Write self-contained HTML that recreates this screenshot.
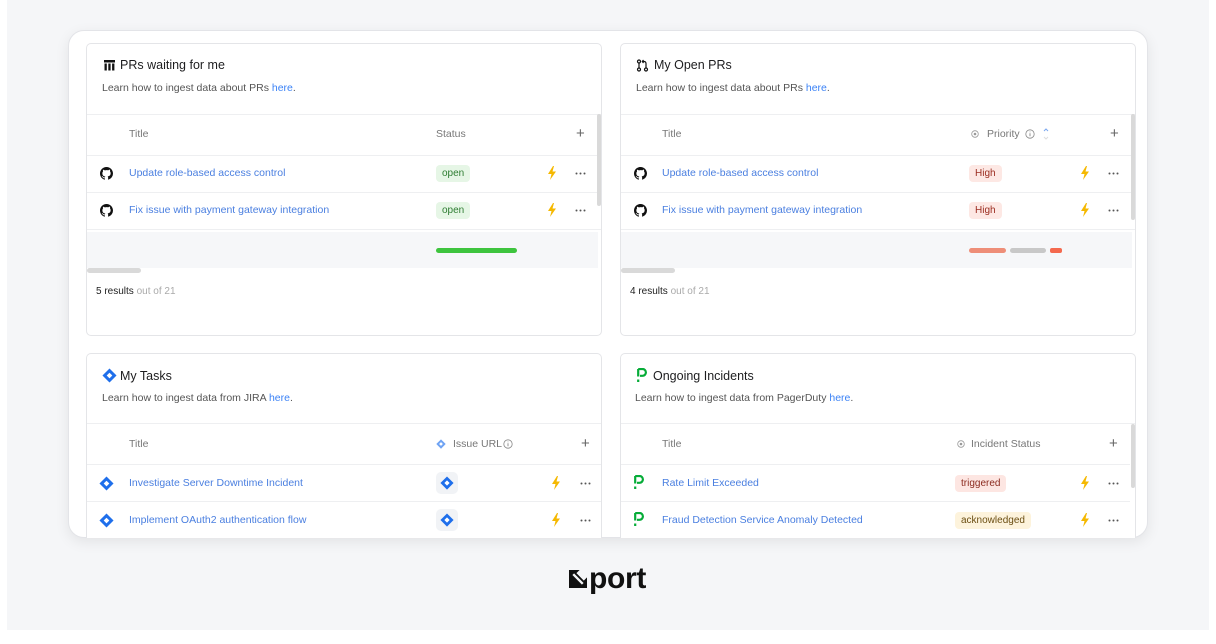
<!DOCTYPE html>
<html><head><meta charset="utf-8"><style>
*{box-sizing:border-box;margin:0;padding:0}
body{width:1216px;height:644px;background:#fff;font-family:"Liberation Sans",sans-serif;position:relative;overflow:hidden;color:#222}
.bg{position:absolute;left:7px;top:0;width:1202px;height:630px;background:#f5f6f8}
.card{position:absolute;left:68px;top:30px;width:1080px;height:508px;background:#fff;border:1px solid #e3e4e8;border-radius:16px;box-shadow:0 4px 14px rgba(0,0,0,.08);overflow:hidden}
.w{position:absolute;background:#fff;border:1px solid #e4e5e8;border-radius:5px;overflow:hidden}
.a{position:absolute;white-space:nowrap;height:16px;line-height:16px}
.t{font-size:12.5px;color:#1d1d1f}
.d{font-size:10.5px;color:#555}
.lnk{color:#3b82f6}
.h{font-size:10.5px;color:#777}
.r{font-size:10.5px;color:#4a7fe0}
.hl{position:absolute;left:0;right:0;height:1px;background:#eeeff1}
.pill{position:absolute;height:17px;line-height:17px;padding:0 6px;border-radius:4px;font-size:10px}
.bolt{position:absolute;width:10px;height:14px}
.dots{position:absolute;width:11px;height:3px}
.plus{position:absolute;font-size:15px;color:#666;line-height:16px;font-weight:300}
.vs{position:absolute;width:4px;background:#d9d9d9;border-radius:2px}
</style></head><body>
<div class="bg"></div>
<div class="card"></div>

<!-- Top-left -->
<div class="w" style="left:86px;top:43px;width:516px;height:293px">
  <svg class="a" style="left:16px;top:15px;width:13px;height:13px" viewBox="0 0 13 13"><rect x="1" y="1" width="11" height="2.5" fill="#111"/><rect x="1.5" y="4.5" width="2.3" height="7" fill="#111"/><rect x="5.3" y="4.5" width="2.3" height="7" fill="#111"/><rect x="9.1" y="4.5" width="2.3" height="7" fill="#111"/></svg>
  <div class="a t" style="left:33px;top:13px">PRs waiting for me</div>
  <div class="a d" style="left:15px;top:36px">Learn how to ingest data about PRs <span class="lnk">here</span>.</div>
  <div class="hl" style="top:70px"></div>
  <div class="a h" style="left:42px;top:82px">Title</div>
  <div class="a h" style="left:349px;top:82px">Status</div>
  <div class="plus" style="left:489px;top:82px">+</div>
  <div class="hl" style="top:111px"></div>
  <svg class="a" style="left:13px;top:123px;width:13px;height:13px" viewBox="0 0 16 16"><path fill="#111" d="M8 0C3.58 0 0 3.58 0 8c0 3.54 2.29 6.53 5.47 7.59.4.07.55-.17.55-.38v-1.33c-2.23.48-2.7-1.07-2.7-1.07-.36-.92-.89-1.17-.89-1.17-.73-.5.06-.49.06-.49.8.06 1.23.83 1.23.83.72 1.23 1.88.87 2.34.67.07-.52.28-.87.51-1.07-1.78-.2-3.65-.89-3.65-3.95 0-.87.31-1.59.82-2.15-.08-.2-.36-1.02.08-2.12 0 0 .67-.21 2.2.82A7.7 7.7 0 0 1 8 3.86c.68 0 1.36.09 2 .27 1.53-1.04 2.2-.82 2.2-.82.44 1.1.16 1.92.08 2.12.51.56.82 1.27.82 2.15 0 3.07-1.87 3.75-3.65 3.95.29.25.54.73.54 1.48v2.2c0 .21.15.46.55.38A8.01 8.01 0 0 0 16 8c0-4.42-3.58-8-8-8z"/></svg>
  <div class="a r" style="left:42px;top:121px">Update role-based access control</div>
  <div class="pill" style="left:349px;top:121px;background:#e6f6e6;color:#2e7d32">open</div>
  <svg class="bolt" style="left:460px;top:122px" viewBox="0 0 10 14"><path d="M6 0L1 8h3.5L3 14l6-8.5H5.5L7 0z" fill="#f5b800"/></svg>
  <svg class="dots" style="left:488px;top:128px" viewBox="0 0 11 3"><circle cx="1.5" cy="1.5" r="1" fill="#555"/><circle cx="5.5" cy="1.5" r="1" fill="#555"/><circle cx="9.5" cy="1.5" r="1" fill="#555"/></svg>
  <div class="hl" style="top:148px"></div>
  <svg class="a" style="left:13px;top:160px;width:13px;height:13px" viewBox="0 0 16 16"><path fill="#111" d="M8 0C3.58 0 0 3.58 0 8c0 3.54 2.29 6.53 5.47 7.59.4.07.55-.17.55-.38v-1.33c-2.230.48-2.7-1.07-2.7-1.07-.36-.92-.89-1.17-.89-1.17-.73-.5.06-.49.06-.49.8.06 1.23.83 1.23.83.72 1.23 1.88.87 2.34.67.07-.52.28-.87.51-1.07-1.78-.2-3.65-.89-3.65-3.95 0-.87.31-1.59.82-2.15-.08-.2-.36-1.02.08-2.12 0 0 .67-.21 2.2.82A7.7 7.7 0 0 1 8 3.86c.68 0 1.36.09 2 .27 1.53-1.04 2.2-.82 2.2-.82.44 1.1.16 1.92.08 2.12.51.56.82 1.27.82 2.15 0 3.07-1.87 3.75-3.65 3.95.29.25.54.73.54 1.48v2.2c0 .21.15.46.55.38A8.01 8.01 0 0 0 16 8c0-4.42-3.58-8-8-8z"/></svg>
  <div class="a r" style="left:42px;top:158px">Fix issue with payment gateway integration</div>
  <div class="pill" style="left:349px;top:158px;background:#e6f6e6;color:#2e7d32">open</div>
  <svg class="bolt" style="left:460px;top:159px" viewBox="0 0 10 14"><path d="M6 0L1 8h3.5L3 14l6-8.5H5.5L7 0z" fill="#f5b800"/></svg>
  <svg class="dots" style="left:488px;top:165px" viewBox="0 0 11 3"><circle cx="1.5" cy="1.5" r="1" fill="#555"/><circle cx="5.5" cy="1.5" r="1" fill="#555"/><circle cx="9.5" cy="1.5" r="1" fill="#555"/></svg>
  <div class="hl" style="top:185px"></div>
  <div style="position:absolute;left:0;top:188px;width:511px;height:36px;background:#f6f7f9"></div>
  <div style="position:absolute;left:349px;top:204px;width:81px;height:5px;border-radius:3px;background:#3ec43e"></div>
  <div style="position:absolute;left:0;top:224px;width:54px;height:5px;border-radius:3px;background:#d9d9d9"></div>
  <div class="vs" style="left:510px;top:70px;height:92px"></div>
  <div class="a" style="left:9px;top:240px;font-size:10px;color:#222">5 results <span style="color:#aaa">out of 21</span></div>
</div>

<!-- Top-right -->
<div class="w" style="left:620px;top:43px;width:516px;height:293px">
  <svg class="a" style="left:15px;top:15px;width:13px;height:13px" viewBox="0 0 13 13" fill="none" stroke="#111" stroke-width="1.2"><circle cx="3" cy="2.5" r="1.5"/><circle cx="3" cy="10.5" r="1.5"/><path d="M3 4v5"/><circle cx="10" cy="10.5" r="1.5"/><path d="M10 9V4.5q0-2-2-2H6.5M7.5 1l-1.2 1.5L7.5 4"/></svg>
  <div class="a t" style="left:33px;top:13px">My Open PRs</div>
  <div class="a d" style="left:15px;top:36px">Learn how to ingest data about PRs <span class="lnk">here</span>.</div>
  <div class="hl" style="top:70px"></div>
  <div class="a h" style="left:41px;top:82px">Title</div>
  <svg class="a" style="left:350px;top:86px;width:8px;height:8px" viewBox="0 0 8 8"><circle cx="4" cy="4" r="3.3" fill="none" stroke="#999" stroke-width=".8"/><circle cx="4" cy="4" r="1.3" fill="#999"/></svg>
  <div class="a h" style="left:366px;top:82px">Priority</div>
  <svg class="a" style="left:404px;top:85px;width:10px;height:10px" viewBox="0 0 10 10"><circle cx="5" cy="5" r="4.2" fill="none" stroke="#888" stroke-width=".8"/><path d="M5 4.3v3M5 2.6v.6" stroke="#888" stroke-width=".9"/></svg>
  <svg class="a" style="left:422px;top:83px;width:6px;height:14px" viewBox="0 0 6 14"><path d="M1 4l2-2 2 2" fill="none" stroke="#7aa7ef" stroke-width="1"/><path d="M1 10l2 2 2-2" fill="none" stroke="#ddd" stroke-width="1"/></svg>
  <div class="plus" style="left:489px;top:82px">+</div>
  <div class="hl" style="top:111px"></div>
  <svg class="a" style="left:13px;top:123px;width:13px;height:13px" viewBox="0 0 16 16"><path fill="#111" d="M8 0C3.58 0 0 3.58 0 8c0 3.54 2.29 6.53 5.47 7.59.4.07.55-.17.55-.38v-1.33c-2.23.48-2.7-1.07-2.7-1.07-.36-.92-.89-1.17-.89-1.17-.73-.5.06-.49.06-.49.8.06 1.23.83 1.23.83.72 1.23 1.88.87 2.34.67.07-.52.28-.87.51-1.07-1.78-.2-3.65-.89-3.65-3.95 0-.87.31-1.59.82-2.15-.08-.2-.36-1.02.08-2.12 0 0 .67-.21 2.2.82A7.7 7.7 0 0 1 8 3.86c.68 0 1.36.09 2 .27 1.53-1.04 2.2-.82 2.2-.82.44 1.1.16 1.92.08 2.12.51.56.82 1.27.82 2.15 0 3.07-1.87 3.75-3.65 3.95.29.25.54.73.54 1.48v2.2c0 .21.15.46.55.38A8.01 8.01 0 0 0 16 8c0-4.42-3.58-8-8-8z"/></svg>
  <div class="a r" style="left:41px;top:121px">Update role-based access control</div>
  <div class="pill" style="left:348px;top:121px;background:#fde8e4;color:#9b2c1f">High</div>
  <svg class="bolt" style="left:459px;top:122px" viewBox="0 0 10 14"><path d="M6 0L1 8h3.5L3 14l6-8.5H5.5L7 0z" fill="#f5b800"/></svg>
  <svg class="dots" style="left:487px;top:128px" viewBox="0 0 11 3"><circle cx="1.5" cy="1.5" r="1" fill="#555"/><circle cx="5.5" cy="1.5" r="1" fill="#555"/><circle cx="9.5" cy="1.5" r="1" fill="#555"/></svg>
  <div class="hl" style="top:148px"></div>
  <svg class="a" style="left:13px;top:160px;width:13px;height:13px" viewBox="0 0 16 16"><path fill="#111" d="M8 0C3.58 0 0 3.58 0 8c0 3.54 2.29 6.53 5.47 7.59.4.07.55-.17.55-.38v-1.33c-2.23.48-2.7-1.07-2.7-1.07-.36-.92-.89-1.17-.89-1.17-.73-.5.06-.49.06-.49.8.06 1.23.83 1.23.83.72 1.23 1.88.87 2.34.67.07-.52.28-.87.51-1.07-1.78-.2-3.65-.89-3.65-3.95 0-.87.31-1.59.82-2.15-.08-.2-.36-1.02.08-2.12 0 0 .67-.21 2.2.82A7.7 7.7 0 0 1 8 3.86c.68 0 1.36.09 2 .27 1.53-1.04 2.2-.82 2.2-.82.44 1.1.16 1.92.08 2.12.51.56.82 1.27.82 2.15 0 3.07-1.87 3.75-3.65 3.95.29.25.54.73.54 1.48v2.2c0 .21.15.46.55.38A8.01 8.01 0 0 0 16 8c0-4.42-3.58-8-8-8z"/></svg>
  <div class="a r" style="left:41px;top:158px">Fix issue with payment gateway integration</div>
  <div class="pill" style="left:348px;top:158px;background:#fde8e4;color:#9b2c1f">High</div>
  <svg class="bolt" style="left:459px;top:159px" viewBox="0 0 10 14"><path d="M6 0L1 8h3.5L3 14l6-8.5H5.5L7 0z" fill="#f5b800"/></svg>
  <svg class="dots" style="left:487px;top:165px" viewBox="0 0 11 3"><circle cx="1.5" cy="1.5" r="1" fill="#555"/><circle cx="5.5" cy="1.5" r="1" fill="#555"/><circle cx="9.5" cy="1.5" r="1" fill="#555"/></svg>
  <div class="hl" style="top:185px"></div>
  <div style="position:absolute;left:0;top:188px;width:511px;height:36px;background:#f6f7f9"></div>
  <div style="position:absolute;left:348px;top:204px;width:37px;height:5px;border-radius:3px;background:#ee8e78"></div>
  <div style="position:absolute;left:389px;top:204px;width:36px;height:5px;border-radius:3px;background:#c8c8c8"></div>
  <div style="position:absolute;left:429px;top:204px;width:12px;height:5px;border-radius:2px;background:#f4694e"></div>
  <div style="position:absolute;left:0;top:224px;width:54px;height:5px;border-radius:3px;background:#d9d9d9"></div>
  <div class="vs" style="left:510px;top:70px;height:106px"></div>
  <div class="a" style="left:9px;top:240px;font-size:10px;color:#222">4 results <span style="color:#aaa">out of 21</span></div>
</div>

<!-- Bottom-left -->
<div class="w" style="left:86px;top:353px;width:516px;height:185px;border-bottom:none;border-radius:5px 5px 0 0">
  <svg class="a" style="left:15px;top:14px;width:15px;height:15px" viewBox="0 0 16 16"><path d="M8 0.5L15.5 8 8 15.5 0.5 8z" fill="#1f6feb"/><path d="M8 5L11 8 8 11 5 8z" fill="#fff"/></svg>
  <div class="a t" style="left:33px;top:14px">My Tasks</div>
  <div class="a d" style="left:15px;top:36px">Learn how to ingest data from JIRA <span class="lnk">here</span>.</div>
  <div class="hl" style="top:69px"></div>
  <div class="a h" style="left:42px;top:82px">Title</div>
  <svg class="a" style="left:349px;top:85px;width:10px;height:10px" viewBox="0 0 16 16"><path d="M8 0.5L15.5 8 8 15.5 0.5 8z" fill="#6fa3f3"/><path d="M8 5L11 8 8 11 5 8z" fill="#fff"/></svg>
  <div class="a h" style="left:366px;top:82px">Issue URL</div>
  <svg class="a" style="left:416px;top:85px;width:10px;height:10px" viewBox="0 0 10 10"><circle cx="5" cy="5" r="4.2" fill="none" stroke="#888" stroke-width=".8"/><path d="M5 4.3v3M5 2.6v.6" stroke="#888" stroke-width=".9"/></svg>
  <div class="plus" style="left:494px;top:82px">+</div>
  <div class="hl" style="top:110px"></div>
  <svg class="a" style="left:12px;top:122px;width:15px;height:15px" viewBox="0 0 16 16"><path d="M8 0.5L15.5 8 8 15.5 0.5 8z" fill="#1f6feb"/><path d="M8 5L11 8 8 11 5 8z" fill="#fff"/></svg>
  <div class="a r" style="left:42px;top:121px">Investigate Server Downtime Incident</div>
  <div style="position:absolute;left:349px;top:118px;width:22px;height:22px;border-radius:5px;background:#f1f3f6"></div>
  <svg class="a" style="left:353px;top:122px;width:14px;height:14px" viewBox="0 0 16 16"><path d="M8 0.5L15.5 8 8 15.5 0.5 8z" fill="#1f6feb"/><path d="M8 5L11 8 8 11 5 8z" fill="#fff"/></svg>
  <svg class="bolt" style="left:464px;top:122px" viewBox="0 0 10 14"><path d="M6 0L1 8h3.5L3 14l6-8.5H5.5L7 0z" fill="#f5b800"/></svg>
  <svg class="dots" style="left:493px;top:128px" viewBox="0 0 11 3"><circle cx="1.5" cy="1.5" r="1" fill="#555"/><circle cx="5.5" cy="1.5" r="1" fill="#555"/><circle cx="9.5" cy="1.5" r="1" fill="#555"/></svg>
  <div class="hl" style="top:147px"></div>
  <svg class="a" style="left:12px;top:159px;width:15px;height:15px" viewBox="0 0 16 16"><path d="M8 0.5L15.5 8 8 15.5 0.5 8z" fill="#1f6feb"/><path d="M8 5L11 8 8 11 5 8z" fill="#fff"/></svg>
  <div class="a r" style="left:42px;top:158px">Implement OAuth2 authentication flow</div>
  <div style="position:absolute;left:349px;top:155px;width:22px;height:22px;border-radius:5px;background:#f1f3f6"></div>
  <svg class="a" style="left:353px;top:159px;width:14px;height:14px" viewBox="0 0 16 16"><path d="M8 0.5L15.5 8 8 15.5 0.5 8z" fill="#1f6feb"/><path d="M8 5L11 8 8 11 5 8z" fill="#fff"/></svg>
  <svg class="bolt" style="left:464px;top:159px" viewBox="0 0 10 14"><path d="M6 0L1 8h3.5L3 14l6-8.5H5.5L7 0z" fill="#f5b800"/></svg>
  <svg class="dots" style="left:493px;top:165px" viewBox="0 0 11 3"><circle cx="1.5" cy="1.5" r="1" fill="#555"/><circle cx="5.5" cy="1.5" r="1" fill="#555"/><circle cx="9.5" cy="1.5" r="1" fill="#555"/></svg>
</div>

<!-- Bottom-right -->
<div class="w" style="left:620px;top:353px;width:516px;height:185px;border-bottom:none;border-radius:5px 5px 0 0">
  <svg class="a" style="left:16px;top:14px;width:11px;height:15px" viewBox="0 0 11 15"><path d="M1.2 1h4.3a3.4 3.4 0 0 1 0 6.8H3" fill="none" stroke="#06ac38" stroke-width="2.2"/><path d="M1.2 1v7.5" stroke="#06ac38" stroke-width="2.2"/><rect x="0.1" y="11.5" width="2.2" height="2.5" fill="#06ac38"/></svg>
  <div class="a t" style="left:32px;top:14px">Ongoing Incidents</div>
  <div class="a d" style="left:14px;top:36px">Learn how to ingest data from PagerDuty <span class="lnk">here</span>.</div>
  <div class="hl" style="top:69px"></div>
  <div class="a h" style="left:41px;top:82px">Title</div>
  <svg class="a" style="left:336px;top:86px;width:8px;height:8px" viewBox="0 0 8 8"><circle cx="4" cy="4" r="3.3" fill="none" stroke="#999" stroke-width=".8"/><circle cx="4" cy="4" r="1.3" fill="#999"/></svg>
  <div class="a h" style="left:350px;top:82px">Incident Status</div>
  <div class="plus" style="left:488px;top:82px">+</div>
  <div class="hl" style="top:110px;right:5px"></div>
  <svg class="a" style="left:13px;top:121px;width:11px;height:15px" viewBox="0 0 11 15"><path d="M1.2 1h4.3a3.4 3.4 0 0 1 0 6.8H3" fill="none" stroke="#06ac38" stroke-width="2.2"/><path d="M1.2 1v7.5" stroke="#06ac38" stroke-width="2.2"/><rect x="0.1" y="11.5" width="2.2" height="2.5" fill="#06ac38"/></svg>
  <div class="a r" style="left:41px;top:121px">Rate Limit Exceeded</div>
  <div class="pill" style="left:334px;top:121px;background:#fde6e2;color:#8b2a1e">triggered</div>
  <svg class="bolt" style="left:459px;top:122px" viewBox="0 0 10 14"><path d="M6 0L1 8h3.5L3 14l6-8.5H5.5L7 0z" fill="#f5b800"/></svg>
  <svg class="dots" style="left:487px;top:128px" viewBox="0 0 11 3"><circle cx="1.5" cy="1.5" r="1" fill="#555"/><circle cx="5.5" cy="1.5" r="1" fill="#555"/><circle cx="9.5" cy="1.5" r="1" fill="#555"/></svg>
  <div class="hl" style="top:147px;right:5px"></div>
  <svg class="a" style="left:13px;top:158px;width:11px;height:15px" viewBox="0 0 11 15"><path d="M1.2 1h4.3a3.4 3.4 0 0 1 0 6.8H3" fill="none" stroke="#06ac38" stroke-width="2.2"/><path d="M1.2 1v7.5" stroke="#06ac38" stroke-width="2.2"/><rect x="0.1" y="11.5" width="2.2" height="2.5" fill="#06ac38"/></svg>
  <div class="a r" style="left:41px;top:158px">Fraud Detection Service Anomaly Detected</div>
  <div class="pill" style="left:334px;top:158px;background:#fdf3dc;color:#6b4e12">acknowledged</div>
  <svg class="bolt" style="left:459px;top:159px" viewBox="0 0 10 14"><path d="M6 0L1 8h3.5L3 14l6-8.5H5.5L7 0z" fill="#f5b800"/></svg>
  <svg class="dots" style="left:487px;top:165px" viewBox="0 0 11 3"><circle cx="1.5" cy="1.5" r="1" fill="#555"/><circle cx="5.5" cy="1.5" r="1" fill="#555"/><circle cx="9.5" cy="1.5" r="1" fill="#555"/></svg>
  <div class="vs" style="left:510px;top:70px;height:64px"></div>
</div>

<!-- port logo -->
<svg style="position:absolute;left:569px;top:570px;width:18px;height:18px" viewBox="0 0 17 17"><path d="M0 0h10l-3 3 7 7 3-3v10H0z" fill="#111"/><path d="M4 4l9 9" stroke="#f5f6f8" stroke-width="2.2"/></svg>
<div style="position:absolute;left:589px;top:561px;font-size:30px;font-weight:bold;color:#111;letter-spacing:-0.3px;line-height:36px">port</div>
</body></html>
